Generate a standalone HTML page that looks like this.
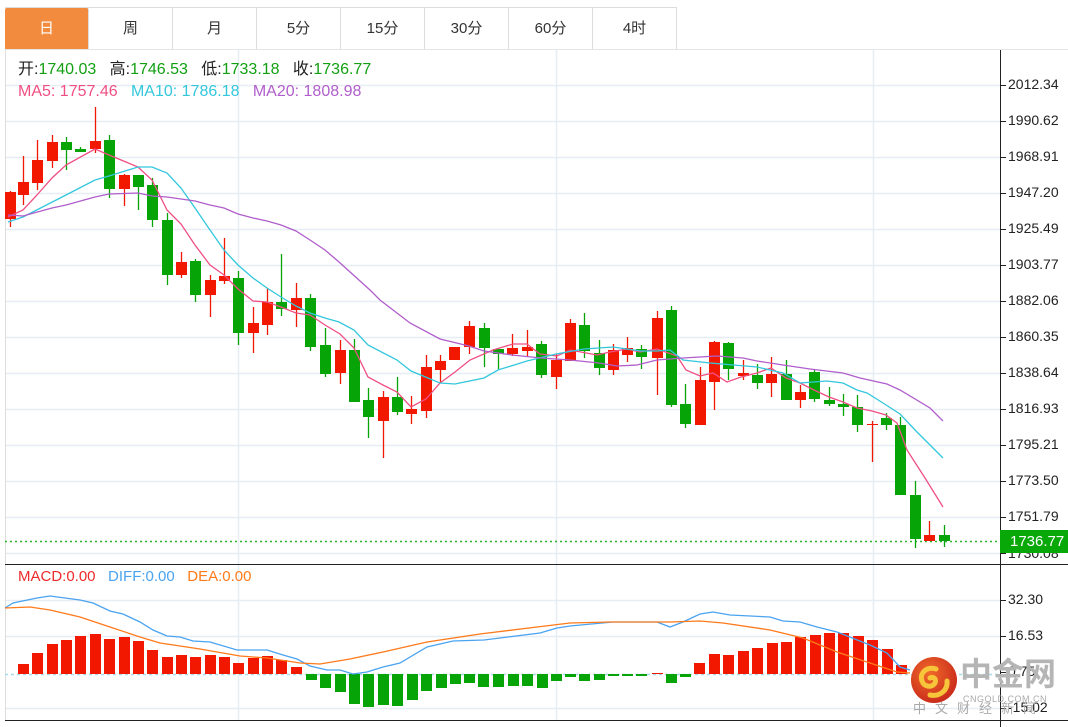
<!DOCTYPE html>
<html><head><meta charset="utf-8"><style>
html,body{margin:0;padding:0;background:#fff;width:1068px;height:727px;overflow:hidden;font-family:"Liberation Sans","Noto Sans CJK SC",sans-serif}
.tabs{position:absolute;left:5px;top:7px;height:42px;display:flex;border-top:1px solid #ddd}
.tab{width:83px;height:42px;border-right:1px solid #ddd;text-align:center;line-height:42px;font-size:15px;color:#333}
.tab.on{background:#f28b3e;color:#fff;border-radius:2px}
.t{position:absolute;font-size:16px;white-space:nowrap;line-height:20px}
.ax{position:absolute;left:1008px;font-size:14px;color:#222}
</style></head><body>
<div class="tabs"><div class="tab on">日</div><div class="tab">周</div><div class="tab">月</div><div class="tab">5分</div><div class="tab">15分</div><div class="tab">30分</div><div class="tab">60分</div><div class="tab">4时</div></div>
<svg id="s" width="1068" height="727" style="position:absolute;left:0;top:0"></svg>
<div class="t" style="left:18px;top:60px;color:#222">开:<span style="color:#12a012">1740.03</span>&nbsp;&nbsp; 高:<span style="color:#12a012">1746.53</span>&nbsp;&nbsp; 低:<span style="color:#12a012">1733.18</span>&nbsp;&nbsp; 收:<span style="color:#12a012">1736.77</span></div>
<div class="t" style="left:18px;top:82px;"><span style="color:#ef4f83">MA5: 1757.46</span>&nbsp;&nbsp; <span style="color:#33c7dd">MA10: 1786.18</span>&nbsp;&nbsp; <span style="color:#b05ecb">MA20: 1808.98</span></div>
<div class="t" style="left:18px;top:567px;font-size:15px"><span style="color:#ee2a2a">MACD:0.00</span>&nbsp;&nbsp; <span style="color:#4aa3f0">DIFF:0.00</span>&nbsp;&nbsp; <span style="color:#ff7a1a">DEA:0.00</span></div>
<div class="ax" style="top:76px">2012.34</div>
<div class="ax" style="top:112px">1990.62</div>
<div class="ax" style="top:148px">1968.91</div>
<div class="ax" style="top:184px">1947.20</div>
<div class="ax" style="top:220px">1925.49</div>
<div class="ax" style="top:256px">1903.77</div>
<div class="ax" style="top:292px">1882.06</div>
<div class="ax" style="top:328px">1860.35</div>
<div class="ax" style="top:364px">1838.64</div>
<div class="ax" style="top:400px">1816.93</div>
<div class="ax" style="top:436px">1795.21</div>
<div class="ax" style="top:472px">1773.50</div>
<div class="ax" style="top:508px">1751.79</div>
<div class="ax" style="top:545px">1730.08</div>
<div class="ax" style="top:591px">32.30</div>
<div class="ax" style="top:627px">16.53</div>
<div class="ax" style="top:663px">0.75</div>
<div class="ax" style="top:699px">-15.02</div>
<div style="position:absolute;left:1000px;top:530px;width:68px;height:23px;background:#08a808"></div>
<div class="ax" style="top:533px;color:#fff;left:1010px;font-size:15px">1736.77</div>
<svg width="1068" height="727" style="position:absolute;left:0;top:0">
<defs><radialGradient id="lg" cx="40%" cy="35%" r="70%"><stop offset="0" stop-color="#f06a2a"/><stop offset="1" stop-color="#c8281a"/></radialGradient></defs>
<circle cx="934" cy="680" r="23" fill="url(#lg)"/>
<path d="M936 669c-9-3-17 4-14 12 2 6 10 7 13 2 2-4-2-7-5-5 M930 695c10 2 18-5 17-14" stroke="#f7c53a" stroke-width="5" fill="none" stroke-linecap="round"/>
</svg>
<div class="t" style="left:960px;top:655px;font-size:32px;line-height:38px;color:#b5b5b5;font-weight:bold;">中金网</div>
<div class="t" style="left:963px;top:689px;font-size:9px;color:#aaa;letter-spacing:.5px">CNGOLD.COM.CN</div>
<div class="t" style="left:913px;top:699px;font-size:13px;color:#aaa;letter-spacing:9px">中文财经新闻</div>
<script>
var s=document.getElementById('s'),h='';
function L(a,b,c,d,col,w,da){h+='<line x1="'+a+'" y1="'+b+'" x2="'+c+'" y2="'+d+'" stroke="'+col+'" stroke-width="'+(w||1)+'"'+(da?' stroke-dasharray="'+da+'"':'')+'/>';}
function R(x,y,w,hh,c){h+='<rect x="'+x+'" y="'+y+'" width="'+w+'" height="'+Math.max(hh,1)+'" fill="'+c+'"/>';}
function P(pts,c){h+='<polyline fill="none" stroke="'+c+'" stroke-width="1.3" points="'+pts+'"/>';}
var G='#e6edf4';
[85,121,157,193,229,265,301,337,373,409,445,481,517,553,600,636,708].forEach(function(y){L(5,y+.5,1000,y+.5,G,1.5);});
[238,556,873].forEach(function(x){L(x+.5,50,x+.5,720,G,1.5);});
L(5.5,50,5.5,720,'#ddd');
L(5,49.5,1068,49.5,'#e5e5e5');
L(1000.5,50,1000.5,727,'#222');
L(5,564.5,1068,564.5,'#222');
L(5,720.5,1068,720.5,'#222');
[85,121,157,193,229,265,301,337,373,409,445,481,517,553,600,636,672,708].forEach(function(y){L(1001,y+.5,1006,y+.5,'#222');});
L(5,541.5,1000,541.5,'#2bb52b',1.5,'2,3');
L(5,674.5,1000,674.5,'#a8dbe8',1.5,'3,3');
var RC='#f21800',GC='#06a406';
var c=[[10,'r',192,219,191,227],[23,'r',182,195,156,205],[37,'r',160,183,140,190],[52,'r',142,161,135,168],[66,'g',142,150,137,170],[80,'g',149,152,147,152],[95,'r',141,149,107,153],[109,'g',140,189,135,198],[124,'r',175,189,174,206],[138,'g',175,187,175,210],[152,'g',185,220,178,227],[167,'g',220,275,213,285],[181,'r',262,275,252,278],[195,'g',261,295,259,302],[210,'r',280,295,275,317],[224,'r',276,281,238,284],[238,'g',278,333,271,345],[253,'r',323,333,307,353],[267,'r',302,325,288,335],[281,'g',302,309,254,316],[296,'r',298,310,283,327],[310,'g',298,347,294,351],[325,'g',345,374,328,377],[340,'r',350,373,340,384],[354,'g',350,402,339,402],[368,'g',400,417,388,438],[383,'r',397,421,391,458],[397,'g',397,412,377,415],[411,'r',409,414,396,424],[426,'r',367,411,355,418],[440,'r',361,370,355,382],[454,'r',347,360,347,360],[469,'r',326,347,321,354],[484,'g',328,348,323,367],[498,'g',349,354,349,369],[512,'r',348,354,334,356],[527,'r',347,351,330,356],[541,'g',344,375,341,378],[556,'r',360,377,354,389],[570,'r',323,361,319,361],[584,'g',325,351,313,358],[599,'g',353,368,340,375],[613,'r',350,370,344,375],[627,'r',348,355,337,362],[641,'g',349,357,345,369],[657,'r',318,358,311,395],[671,'g',310,405,306,407],[685,'g',404,424,384,428],[700,'r',380,425,367,425],[714,'r',342,382,341,410],[728,'g',343,369,342,380],[743,'r',373,376,360,380],[757,'g',375,383,364,389],[771,'r',374,383,357,397],[786,'g',374,400,360,400],[800,'r',392,400,385,408],[814,'g',372,399,370,402],[829,'g',400,404,387,406],[843,'g',404,407,394,416],[857,'g',407,425,395,432],[872,'r',424,425,421,462],[886,'g',418,425,413,430],[900,'g',425,495,417,495],[915,'g',495,539,481,548],[929,'r',535,541,521,541],[944,'g',535,541,525,547]];
c.forEach(function(k){var col=k[1]=='r'?RC:GC;L(k[0]+.5,k[4],k[0]+.5,k[5],col,1.3);R(k[0]-5,k[2],11,k[3]-k[2],col);});
P('8,217 23,210 37,195 52,178 66,165 95,149 109,155 138,167 152,180 167,210 181,224 195,245 210,265 224,275 238,289 253,301 267,302 281,307 296,313 310,315 325,325 340,334 354,348 368,377 383,385 397,392 411,407 426,399 440,383 455,372 470,360 493,350 513,344 527,344 540,354 557,356 570,350 597,355 610,352 627,349 640,352 657,349 677,356 686,370 700,376 713,373 727,382 741,377 757,373 771,368 786,378 800,383 814,390 829,397 843,402 857,408 872,411 886,415 897,423 907,450 925,478 943,507','#ef4f83');
P('8,222 23,217 66,195 95,180 109,176 138,167 152,167 167,173 181,188 195,208 210,230 224,250 238,265 253,278 267,288 281,297 296,306 310,313 325,318 339,322 354,330 368,345 397,360 411,371 440,383 455,384 484,378 498,370 527,361 556,354 584,349 613,347 627,349 641,351 657,351 670,350 683,360 710,363 757,367 783,373 800,383 827,381 843,383 857,390 867,393 883,403 900,414 917,432 943,458','#33c7dd');
P('8,215 23,216 52,208 66,205 95,197 109,194 138,193 152,196 167,197 181,199 195,201 210,205 224,208 238,214 253,218 267,221 281,225 296,231 310,240 325,250 339,262 370,290 380,300 410,323 440,339 469,346 484,351 512,355 541,358 570,360 599,363 617,366 637,365 657,360 683,358 717,356 743,358 757,361 783,365 810,369 843,373 860,378 887,384 900,390 930,408 943,421','#b05ecb');
var m=[[23,664],[37,653],[52,644],[66,640],[80,636],[95,634],[109,639],[124,637],[138,641],[152,650],[167,657],[181,655],[195,657],[210,655],[224,657],[238,663],[253,658],[267,656],[281,660],[296,667],[311,680],[325,688],[340,692],[354,704],[368,707],[383,705],[397,706],[412,700],[426,691],[441,688],[455,684],[469,683],[483,687],[498,687],[513,686],[527,686],[542,688],[556,681],[570,677],[584,681],[599,680],[613,676],[627,676],[641,676],[657,673],[671,683],[685,677],[699,663],[714,654],[728,655],[743,651],[757,648],[772,643],[786,642],[800,637],[815,635],[829,633],[843,633],[858,636],[872,640],[887,649],[901,665]];
m.forEach(function(k){var z=674;if(k[1]<z)R(k[0]-5,k[1],11,z-k[1],RC);else R(k[0]-5,z,11,k[1]-z,GC);});
P('5,608 13,603 37,598 50,596 80,600 93,603 110,611 123,614 140,622 153,630 167,636 180,637 193,641 210,642 237,650 267,650 283,655 297,659 310,666 327,670 340,670 353,674 367,672 383,667 400,663 427,647 453,641 484,640 540,633 557,628 570,626 613,622 657,622 670,627 683,622 700,614 713,612 730,615 770,617 783,621 800,622 817,627 837,632 870,645 887,653 900,667 910,670','#4aa3f0');
P('5,608 30,607 50,610 80,617 110,627 140,637 160,643 200,649 240,656 267,658 300,663 320,664 350,659 383,652 427,642 480,634 537,627 570,623 610,622 670,622 700,621 723,623 770,630 803,638 837,652 870,663 897,672 910,673','#ff7a1a');
s.innerHTML=h;
</script>
</body></html>
